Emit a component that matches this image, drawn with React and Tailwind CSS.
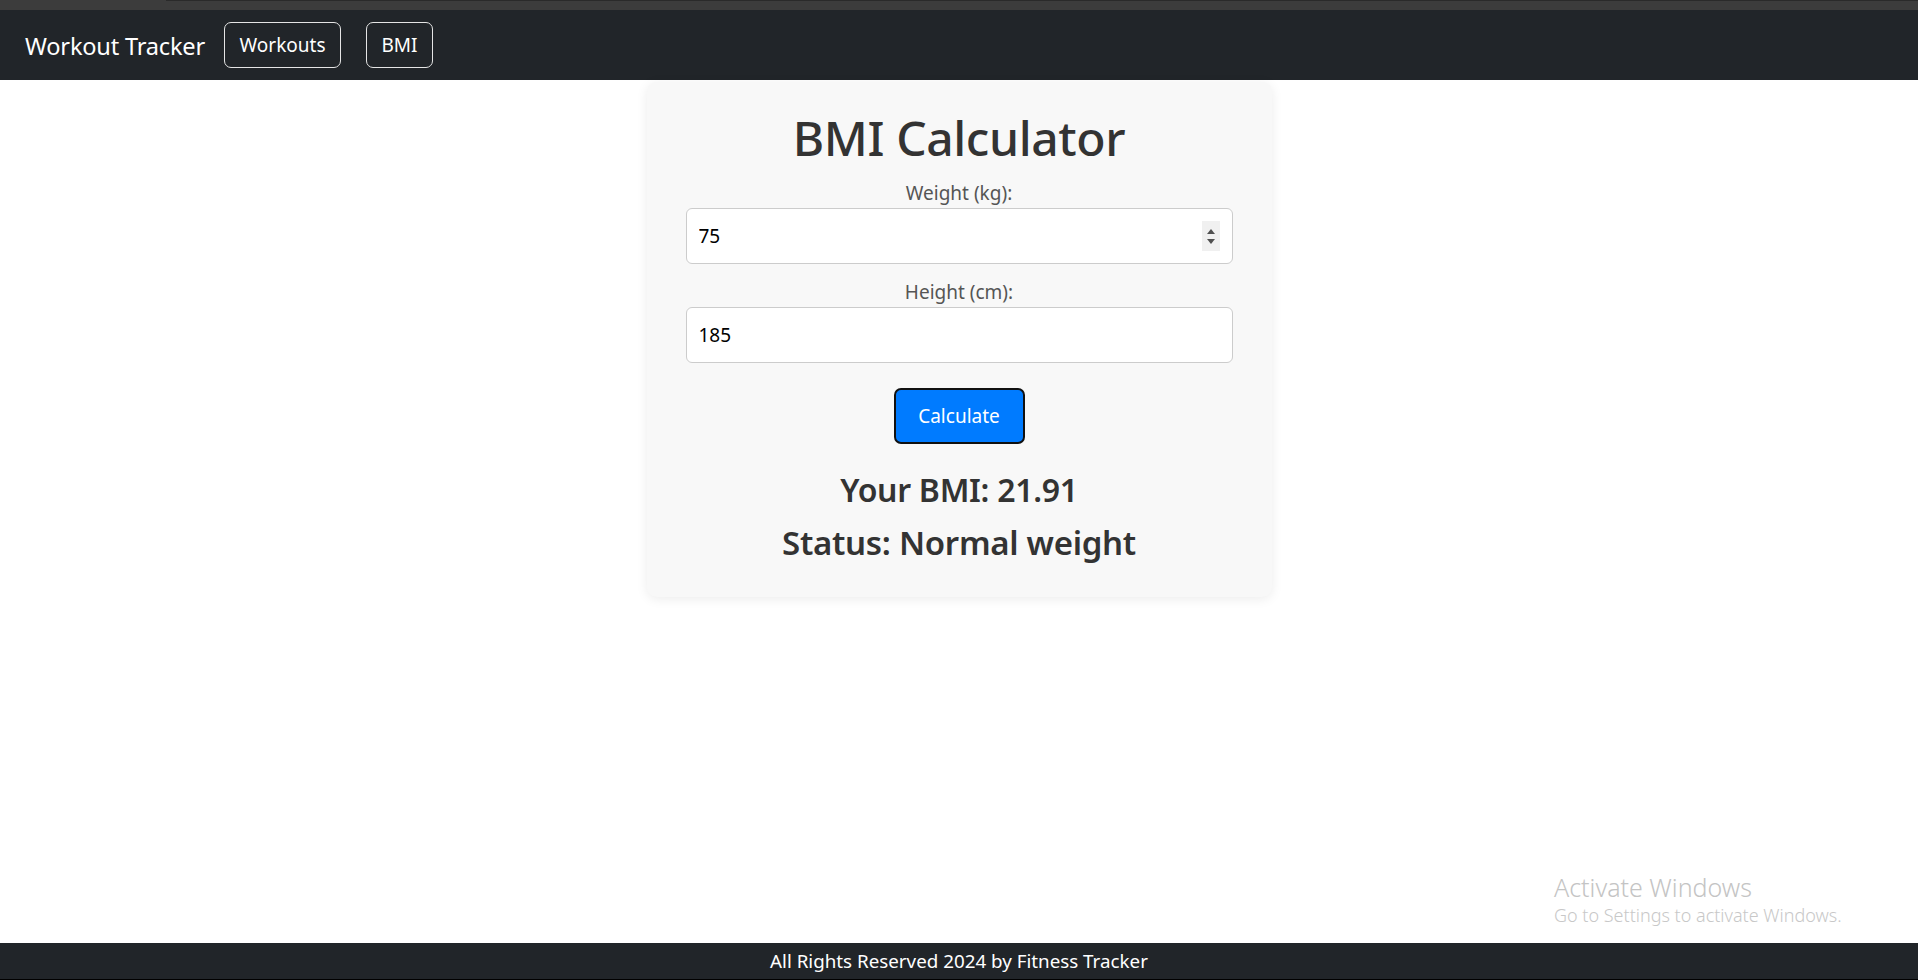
import React from "react";

const font = { fontFamily: '"Noto Sans", "Open Sans", sans-serif' };

function Spinner() {
  return (
    <div className="absolute right-[13px] top-[13px] w-[18px] h-[30px] bg-[#f0f0f0] flex flex-col items-center justify-center gap-[5px]">
      <svg width="8" height="5" viewBox="0 0 8 5"><path d="M0 5 L4 0 L8 5 Z" fill="#505050" /></svg>
      <svg width="8" height="5" viewBox="0 0 8 5"><path d="M0 0 L8 0 L4 5 Z" fill="#505050" /></svg>
    </div>
  );
}

export default function App() {
  return (
    <div className="relative h-[980px] flex flex-col bg-white overflow-hidden" style={font}>
      <div className="h-[10px] bg-[#3c3c3c] flex">
        <div className="w-[166px]" />
        <div className="flex-1 border-t border-[#2a2a2a]" />
      </div>
      <nav className="h-[70px] bg-[#212529] flex items-center pl-[25px]">
        <span className="text-white text-[23.6px] mr-[19px] mt-[3px] tracking-[-0.2px]">Workout Tracker</span>
        <button className="h-[46px] w-[117px] border border-[#e5e5e5] rounded-[7px] text-white text-[19px] mr-[25px]">Workouts</button>
        <button className="h-[46px] w-[67px] border border-[#e5e5e5] rounded-[7px] text-white text-[19px]">BMI</button>
      </nav>
      <main className="flex-1">
        <div className="mt-[2px] mx-auto w-[625px] rounded-[10px] bg-[#f8f8f8] shadow-[0_2px_12px_rgba(0,0,0,0.08)] pt-[25px] pb-[33px] px-[39px] flex flex-col items-center">
          <h1 className="text-[48px] leading-[62px] font-medium text-[#333] tracking-[-0.4px]">BMI Calculator</h1>
          <label className="mt-[9px] text-[19px] leading-[30px] text-[#555]">Weight (kg):</label>
          <div className="relative w-full">
            <input readOnly value="75" className="w-full h-[56px] bg-white border border-[#cccccc] rounded-[6px] pl-[12px] text-[19px] text-black outline-none" style={font} />
            <Spinner />
          </div>
          <label className="mt-[13px] text-[19px] leading-[30px] text-[#555]">Height (cm):</label>
          <input readOnly value="185" className="w-full h-[56px] bg-white border border-[#cccccc] rounded-[6px] pl-[12px] text-[19px] text-black outline-none" style={font} />
          <button className="mt-[25px] w-[131px] h-[56px] bg-[#007bff] border-2 border-[#111] rounded-[7px] text-white text-[19px]">Calculate</button>
          <h3 className="mt-[25px] text-[32px] leading-[42px] font-semibold text-[#333] tracking-[-0.3px]">Your BMI: 21.91</h3>
          <h3 className="mt-[11px] text-[33px] leading-[42px] font-semibold text-[#333] tracking-[-0.3px]">Status: Normal weight</h3>
        </div>
      </main>
      <footer className="h-[37px] bg-[#212529] border-b border-black flex items-center justify-center">
        <span className="text-white text-[18.8px]">All Rights Reserved 2024 by Fitness Tracker</span>
      </footer>
      <div className="absolute left-[1554px] top-[871px] pointer-events-none">
        <div className="text-[25px] leading-[32px] text-[#c4c4c4] font-light">Activate Windows</div>
        <div className="text-[18px] leading-[24px] text-[#c8c8c8] font-light">Go to Settings to activate Windows.</div>
      </div>
    </div>
  );
}
